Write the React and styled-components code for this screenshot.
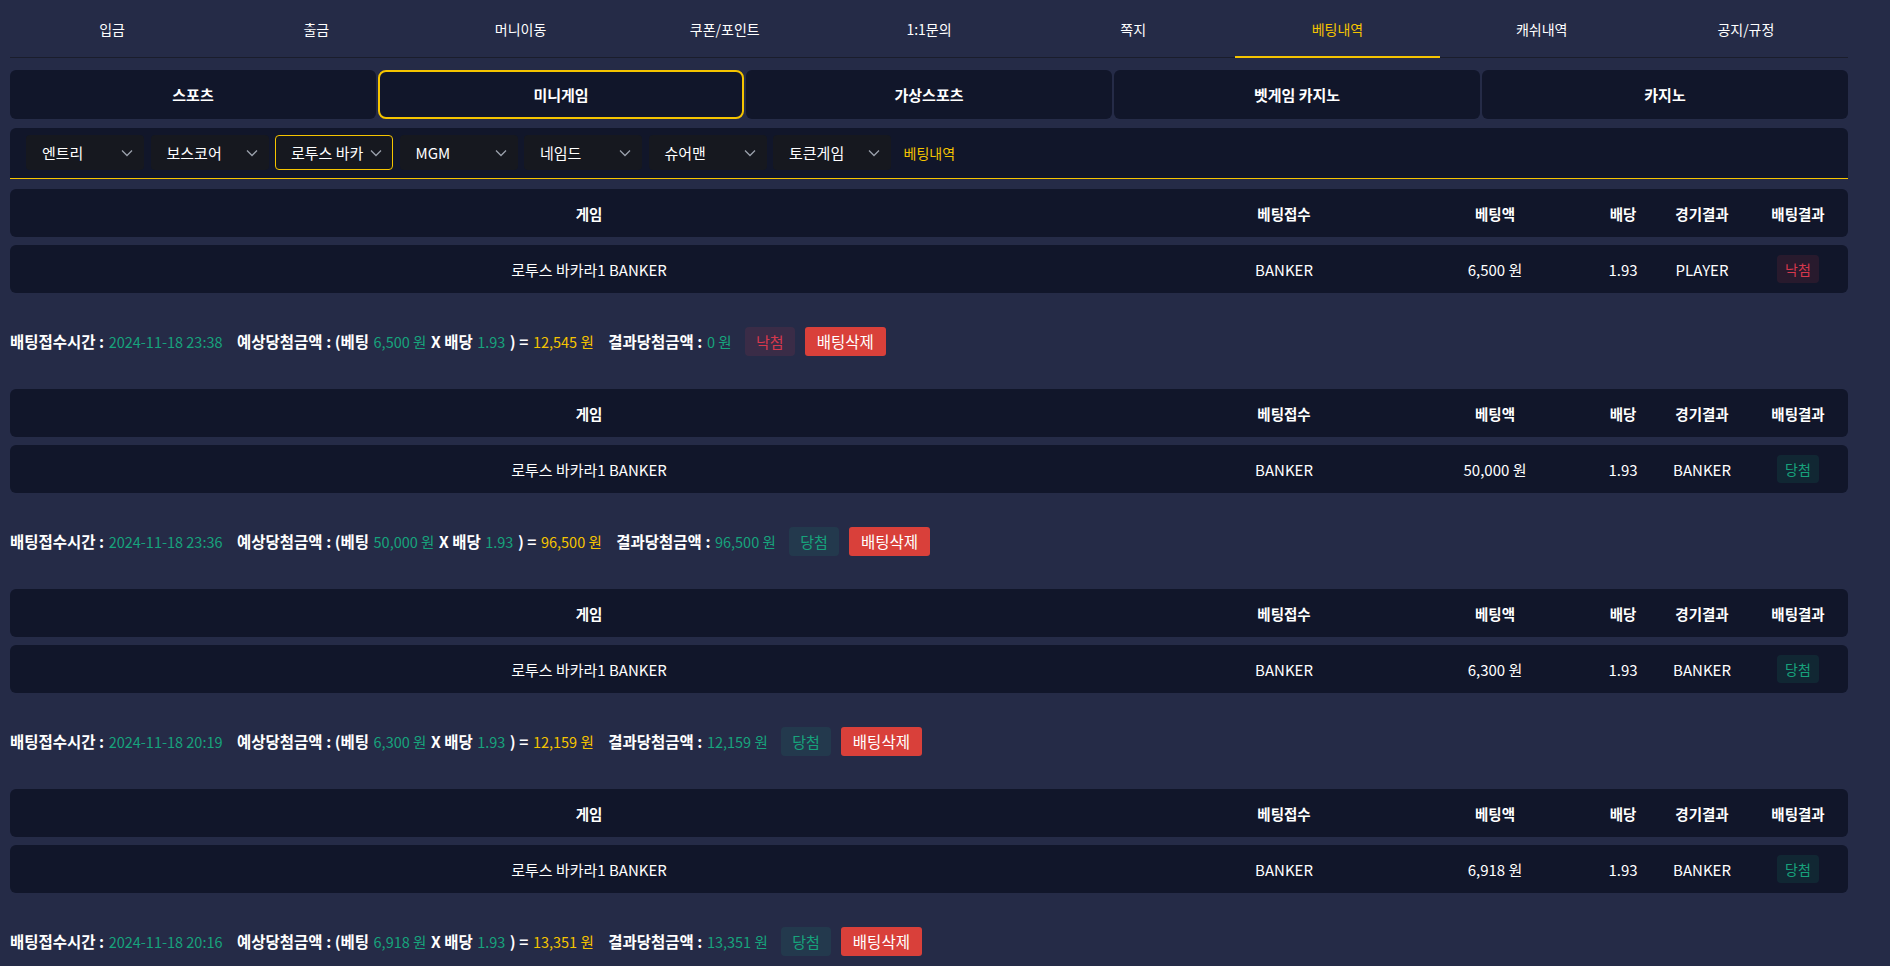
import React from "react";
import styled, { createGlobalStyle } from "styled-components";

const GlobalStyle = createGlobalStyle`
  body {
    margin: 0;
    background-color: #252b47;
    font-family: "Noto Sans CJK KR", "Noto Sans", sans-serif;
    color: #ffffff;
  }
`

const Page = styled.div`
  width: 1838px;
  margin-left: 10px;
`

const TopNav = styled.div`
  display: grid;
  grid-template-columns: repeat(9, 1fr);
  border-bottom: 1px solid #1a1d2c;
`

const NavItem = styled.div`
  height: 56px;
  line-height: 58px;
  text-align: center;
  font-size: 14px;
  color: ${props => props.active ? "#f5c400" : "#ffffff"};
  border-bottom: 2px solid ${props => props.active ? "#f5c400" : "transparent"};
  margin-bottom: -1px;
`

const GameTabs = styled.div`
  display: grid;
  grid-template-columns: repeat(5, 1fr);
  gap: 2px;
  margin-top: 12px;
`

const GameTab = styled.div`
  height: 49px;
  box-sizing: border-box;
  display: flex;
  align-items: center;
  justify-content: center;
  background-color: #11162a;
  border-radius: ${props => props.active ? "8px" : "6px"};
  border: 2px solid ${props => props.active ? "#f5c400" : "transparent"};
  font-size: 15px;
  font-weight: bold;
`

const FilterBar = styled.div`
  margin-top: 9px;
  height: 51px;
  box-sizing: border-box;
  display: flex;
  align-items: center;
  gap: 6.5px;
  padding: 0 16px 1px;
  background-color: #11162a;
  border-radius: 6px 6px 0 0;
  border-bottom: 1px solid #f5c400;
`

const Select = styled.div`
  width: 118px;
  height: 35px;
  box-sizing: border-box;
  display: flex;
  align-items: center;
  justify-content: space-between;
  padding: 0 10px 0 15px;
  background-color: #16181f;
  border: 1px solid ${props => props.active ? "#f5c400" : "transparent"};
  border-radius: 4px;
  font-size: 15px;
  color: #ffffff;
`

const SelectText = styled.span`
  white-space: nowrap;
`

const HistoryLink = styled.span`
  margin-left: 6px;
  font-size: 14px;
  color: #f5c400;
`

const BetList = styled.div`
  margin-top: 10px;
`

const TableCard = styled.div`
  display: grid;
  grid-template-columns: 1158px 232px 190px 66px 92px 100px;
  align-items: center;
  height: 48px;
  background-color: #11162a;
  border-radius: 6px;
  font-size: ${props => props.head ? "14.5px" : "15px"};
  font-weight: ${props => props.head ? "bold" : "normal"};
  margin-bottom: ${props => props.head ? "8px" : "0"};
`

const Cell = styled.div`
  text-align: center;
  white-space: nowrap;
`

const Badge = styled.span`
  display: inline-block;
  padding: 0 8px;
  height: 28px;
  line-height: 28px;
  border-radius: 4px;
  font-size: 14px;
  color: ${props => props.win ? "#17a37c" : "#d6384d"};
  background-color: ${props => props.win ? "rgba(23, 163, 124, 0.12)" : "rgba(214, 56, 77, 0.12)"};
`

const Summary = styled.div`
  height: 96px;
  display: flex;
  align-items: center;
  font-size: 15.5px;
  white-space: nowrap;
`

const Label = styled.span`
  font-weight: bold;
  color: #ffffff;
  margin-left: ${props => props.gap ? "10px" : "0"};
`

const Value = styled.span`
  font-size: 14.5px;
  color: ${props => props.yellow ? "#f5c400" : "#17a37c"};
  margin: 0 4.5px;
`

const SummaryBadge = styled(Badge)`
  margin-left: 9px;
  padding: 0 11px;
  height: 29px;
  line-height: 29px;
  font-size: 15px;
`

const DeleteButton = styled.button`
  margin-left: 10px;
  height: 29px;
  padding: 0 12px;
  border: none;
  border-radius: 3px;
  background-color: #d9403a;
  color: #ffffff;
  font-family: inherit;
  font-size: 15.5px;
`

const Chevron = () => (
  <svg width="12" height="8" viewBox="0 0 12 8" fill="none">
    <polyline points="1,1.5 6,6.5 11,1.5" stroke="#9aa0ab" strokeWidth="1.3" />
  </svg>
)

const navItems = ["입금", "출금", "머니이동", "쿠폰/포인트", "1:1문의", "쪽지", "베팅내역", "캐쉬내역", "공지/규정"]
const gameTabs = ["스포츠", "미니게임", "가상스포츠", "벳게임 카지노", "카지노"]
const selects = ["엔트리", "보스코어", "로투스 바카", "MGM", "네임드", "슈어맨", "토큰게임"]

const bets = [
  { time: "2024-11-18 23:38", amount: "6,500", expect: "12,545", result: "PLAYER", win: false, payout: "0" },
  { time: "2024-11-18 23:36", amount: "50,000", expect: "96,500", result: "BANKER", win: true, payout: "96,500" },
  { time: "2024-11-18 20:19", amount: "6,300", expect: "12,159", result: "BANKER", win: true, payout: "12,159" },
  { time: "2024-11-18 20:16", amount: "6,918", expect: "13,351", result: "BANKER", win: true, payout: "13,351" },
]

const BetBlock = ({ bet }) => (
  <div>
    <TableCard head>
      <Cell>게임</Cell>
      <Cell>베팅접수</Cell>
      <Cell>베팅액</Cell>
      <Cell>배당</Cell>
      <Cell>경기결과</Cell>
      <Cell>배팅결과</Cell>
    </TableCard>
    <TableCard>
      <Cell>로투스 바카라1 BANKER</Cell>
      <Cell>BANKER</Cell>
      <Cell>{bet.amount} 원</Cell>
      <Cell>1.93</Cell>
      <Cell>{bet.result}</Cell>
      <Cell><Badge win={bet.win}>{bet.win ? "당첨" : "낙첨"}</Badge></Cell>
    </TableCard>
    <Summary>
      <Label>배팅접수시간 :</Label>
      <Value>{bet.time}</Value>
      <Label gap>예상당첨금액 : (베팅</Label>
      <Value>{bet.amount} 원</Value>
      <Label>X 배당</Label>
      <Value>1.93</Value>
      <Label>) =</Label>
      <Value yellow>{bet.expect} 원</Value>
      <Label gap>결과당첨금액 :</Label>
      <Value>{bet.payout} 원</Value>
      <SummaryBadge win={bet.win}>{bet.win ? "당첨" : "낙첨"}</SummaryBadge>
      <DeleteButton>배팅삭제</DeleteButton>
    </Summary>
  </div>
)

export default function App() {
  return (
    <Page>
      <GlobalStyle />
      <TopNav>
        {navItems.map(item => (
          <NavItem key={item} active={item === "베팅내역"}>{item}</NavItem>
        ))}
      </TopNav>
      <GameTabs>
        {gameTabs.map(tab => (
          <GameTab key={tab} active={tab === "미니게임"}>{tab}</GameTab>
        ))}
      </GameTabs>
      <FilterBar>
        {selects.map(s => (
          <Select key={s} active={s === "로투스 바카"}>
            <SelectText>{s}</SelectText>
            <Chevron />
          </Select>
        ))}
        <HistoryLink>베팅내역</HistoryLink>
      </FilterBar>
      <BetList>
        {bets.map((bet, i) => <BetBlock key={i} bet={bet} />)}
      </BetList>
    </Page>
  )
}
